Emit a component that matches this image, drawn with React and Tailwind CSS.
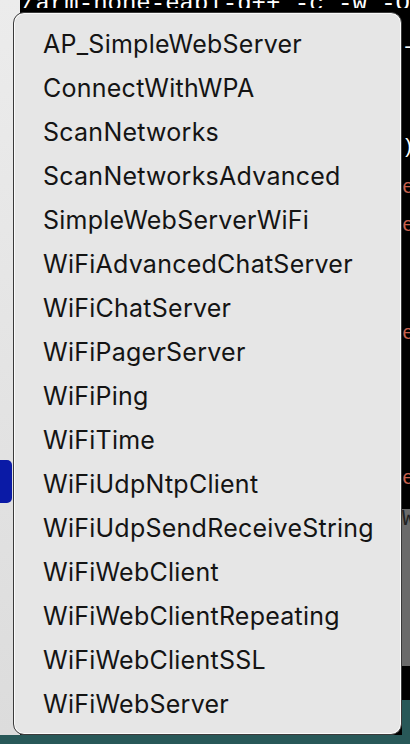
const examples = [
  "AP_SimpleWebServer",
  "ConnectWithWPA",
  "ScanNetworks",
  "ScanNetworksAdvanced",
  "SimpleWebServerWiFi",
  "WiFiAdvancedChatServer",
  "WiFiChatServer",
  "WiFiPagerServer",
  "WiFiPing",
  "WiFiTime",
  "WiFiUdpNtpClient",
  "WiFiUdpSendReceiveString",
  "WiFiWebClient",
  "WiFiWebClientRepeating",
  "WiFiWebClientSSL",
  "WiFiWebServer",
];

const App = () => {
  return (
    <div className="relative w-[410px] h-[744px] overflow-hidden bg-black flex flex-col">
      {/* backdrop: editor + terminal windows */}
      <div className="flex flex-1">
        <div className="w-[22px] flex flex-col bg-gradient-to-b from-[#ececec] to-[#dcdcdc]">
          <div className="h-[460px]" />
          <div className="h-[43px] w-[12px] rounded-r-[5px] bg-[#0a1aa6]" />
        </div>
        <div className="flex-1 flex flex-col bg-black">
          <div className="h-[12px] overflow-hidden text-white text-[24px] leading-[16px] font-['Liberation_Mono',monospace] whitespace-nowrap -mt-[4px] pl-px">
            /arm-none-eabi-g++ -c -w -O
          </div>
          <div className="flex-1 flex justify-end">
            <div className="w-[8px] flex flex-col font-['Liberation_Mono',monospace] text-[20px] leading-none overflow-hidden">
              <div className="h-[30px]" />
              <div className="text-white h-[100px]">-</div>
              <div className="text-white h-[40px]">)</div>
              <div className="text-[#c8614f] h-[38px]">e</div>
              <div className="text-[#c8614f] h-[108px]">e</div>
              <div className="text-[#c8614f] h-[145px]">e</div>
              <div className="text-[#c8614f] h-[40px]">e</div>
              <div className="bg-[#6b6b6b] h-[157px] text-[#222] text-[22px]">W</div>
              <div className="h-[30px]" />
            </div>
          </div>
        </div>
      </div>
      <div className="h-[9px] bg-[#285858] flex justify-end">
        <div className="w-[8px]" />
      </div>
      <div className="absolute right-0 top-[700px] w-[8px] h-[44px] bg-[#285858]" />

      {/* popup menu */}
      <div className="absolute left-[13px] top-[12px] w-[389px] h-[723px] rounded-[11px] bg-[#e6e6e6] border border-[#3a3a3a] shadow-[inset_0_0_0_1px_rgba(255,255,255,0.8)] pt-[10px] pb-[8px] pl-[29px]">
        <ul className="flex flex-col">
          {examples.map((name) => (
            <li
              key={name}
              className="h-[44px] flex items-center text-[25px] text-[#141414] font-['Inter',sans-serif] tracking-[0.25px]"
            >
              {name}
            </li>
          ))}
        </ul>
      </div>
    </div>
  );
};

export default App;
